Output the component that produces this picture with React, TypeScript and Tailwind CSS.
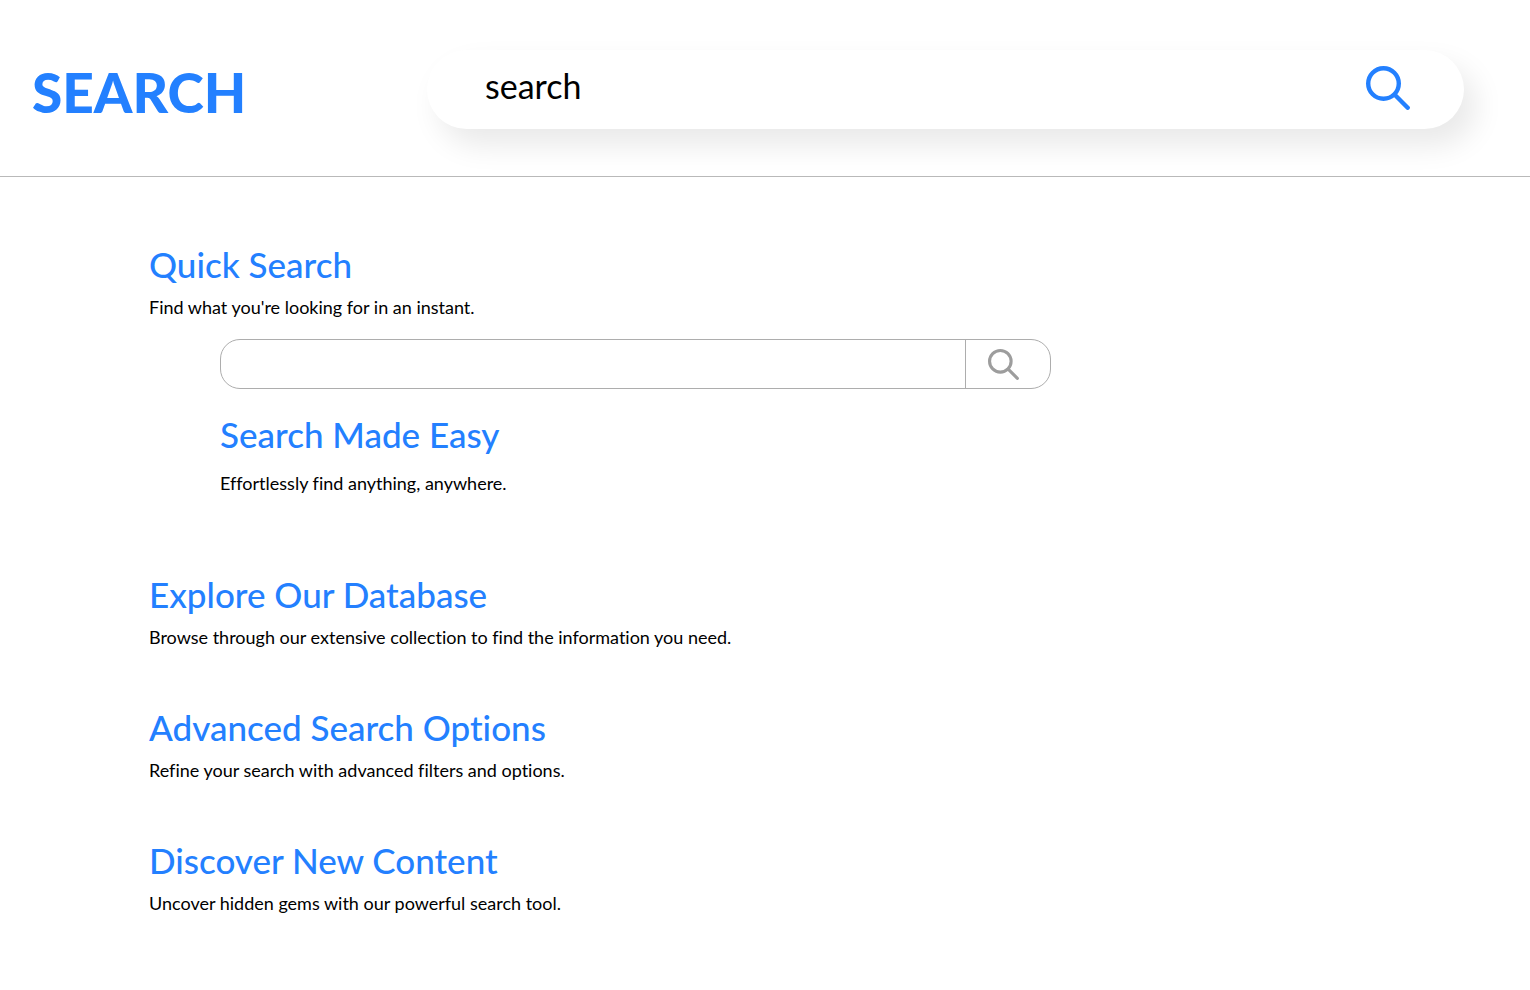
type IconProps = { className: string };

function SearchIcon({ className }: IconProps) {
  return (
    <svg viewBox="0 0 44 44" fill="none" stroke="currentColor" strokeLinecap="round" className={className} aria-hidden="true">
      <circle cx="17.5" cy="17.5" r="15.3" strokeWidth="4.4" />
      <path d="M29 29L41.7 41.7" strokeWidth="4.4" />
    </svg>
  );
}

const sections = [
  { title: "Explore Our Database", text: "Browse through our extensive collection to find the information you need." },
  { title: "Advanced Search Options", text: "Refine your search with advanced filters and options." },
  { title: "Discover New Content", text: "Uncover hidden gems with our powerful search tool." },
];

const heading = "text-[35px] leading-[48px] font-medium text-[#2380ff]";
const body = "text-[18px] leading-7 text-black";

export default function App() {
  return (
    <div className="min-h-screen bg-white font-['Lato',sans-serif] [font-variant-ligatures:none]">
      <header className="flex items-center border-b border-[#b9b9b9] pt-[50px] pr-[66px] pb-[47px] pl-8">
        <h1 className="w-[395px] shrink-0 pt-1 text-[55px] leading-[64px] font-black text-[#2380ff]">SEARCH</h1>
        <form className="flex h-[79px] min-w-0 flex-1 items-center rounded-full bg-white pr-[54px] pb-1 pl-[58px] shadow-[12px_16px_30px_rgba(0,0,0,0.09)]">
          <input
            type="text"
            aria-label="Search"
            defaultValue="search"
            className="h-12 min-w-0 flex-1 bg-transparent pb-1 text-[34px] leading-10 text-black outline-none"
          />
          <button type="button" aria-label="Submit search" className="text-[#2380ff]">
            <SearchIcon className="size-11" />
          </button>
        </form>
      </header>
      <main className="px-[149px] pt-[63px] pb-[70px]">
        <section>
          <h2 className={heading}>Quick Search</h2>
          <p className={body + " mt-[5px]"}>Find what you're looking for in an instant.</p>
          <div className="pt-[18px] pl-[71px]">
            <form className="flex h-[50px] max-w-[831px] rounded-[20px] border border-[#adadad]">
              <input type="text" aria-label="Quick search" className="min-w-0 flex-1 rounded-l-[20px] bg-transparent px-5 text-[18px] outline-none" />
              <button type="button" aria-label="Run quick search" className="flex w-[85px] items-center border-l border-[#adadad] pl-[22px] text-[#9d9d9d]">
                <SearchIcon className="size-[31px]" />
              </button>
            </form>
            <h2 className={heading + " mt-[21px]"}>Search Made Easy</h2>
            <p className={body + " mt-[11px]"}>Effortlessly find anything, anywhere.</p>
          </div>
        </section>
        <div className="mt-[73px] flex flex-col gap-[52px]">
          {sections.map((s) => (
            <section key={s.title}>
              <h2 className={heading}>{s.title}</h2>
              <p className={body + " mt-[5px]"}>{s.text}</p>
            </section>
          ))}
        </div>
      </main>
    </div>
  );
}
